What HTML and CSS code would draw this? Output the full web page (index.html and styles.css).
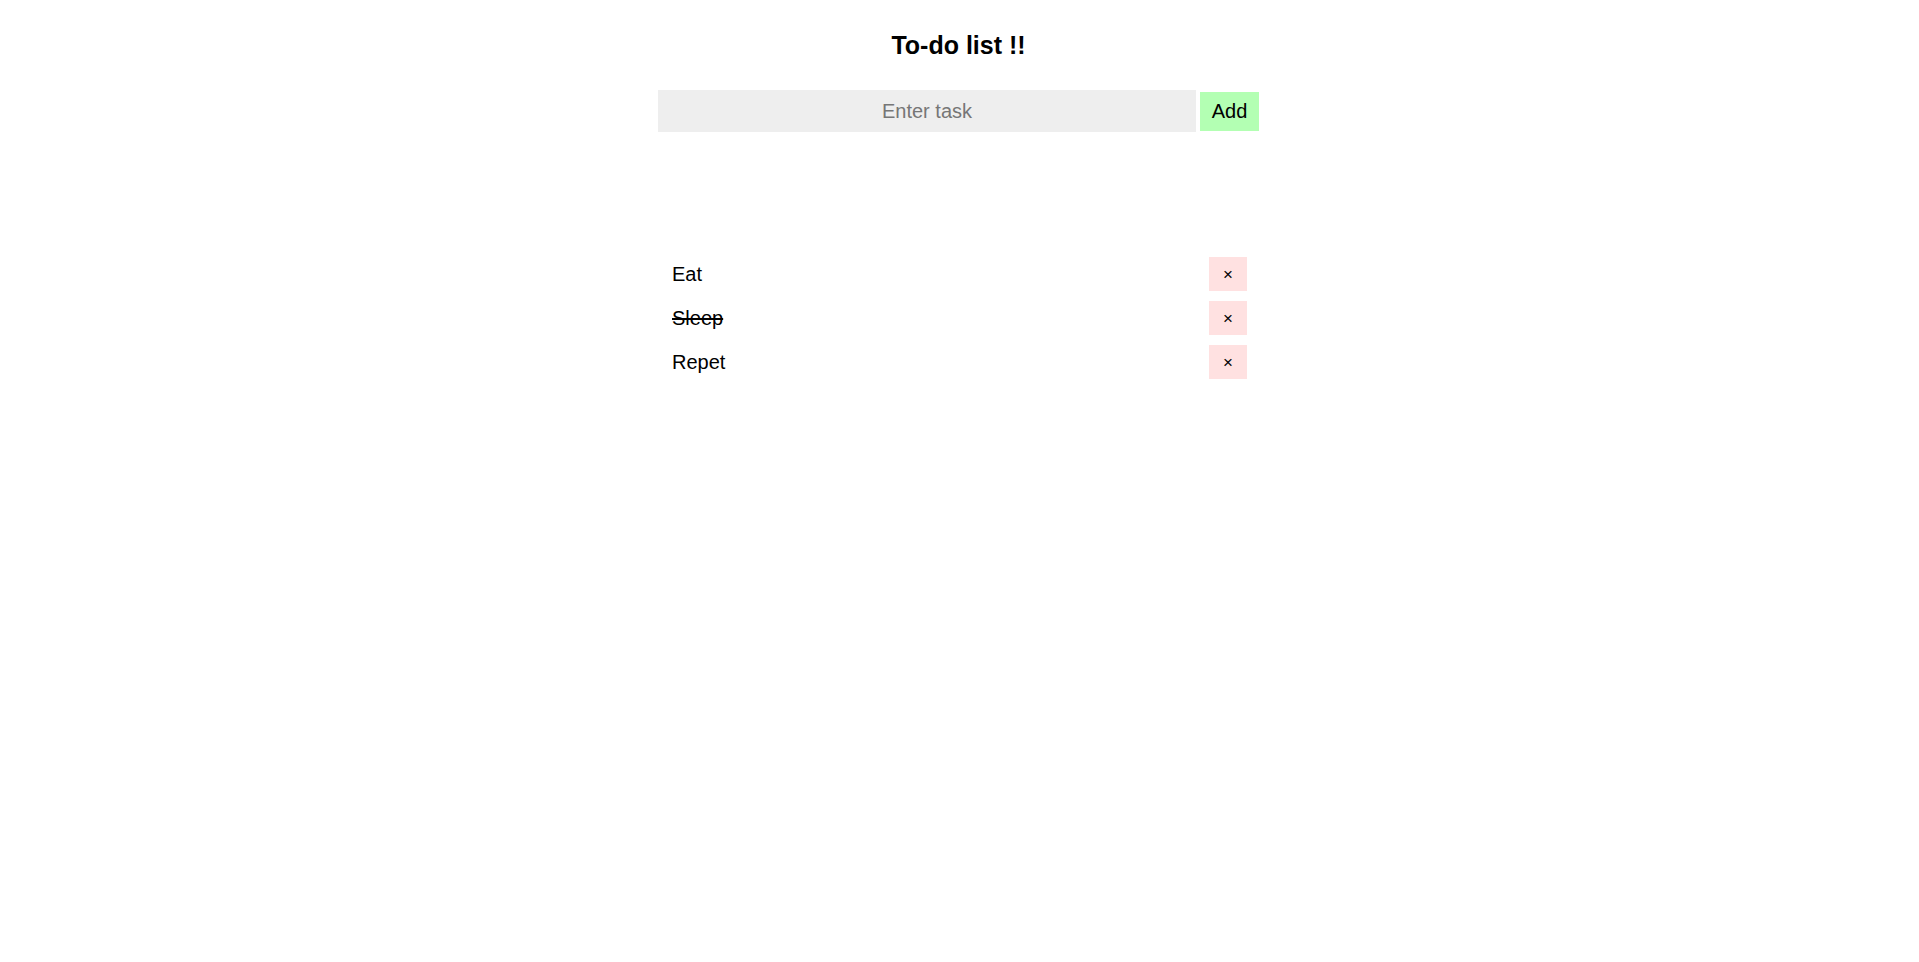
FILE: index.html
```html
<!DOCTYPE html>
<html lang="en">
<head>
<meta charset="utf-8">
<title>To-do list</title>
<link rel="stylesheet" href="styles.css">
</head>
<body>
<div class="app">
  <h1 class="title">To-do list !!</h1>
  <form class="entry" onsubmit="return false">
    <input class="entry-input" type="text" placeholder="Enter task">
    <button class="entry-add" type="submit">Add</button>
  </form>
  <ul class="tasks">
    <li class="task"><span class="task-text">Eat</span><button class="task-remove" type="button">×</button></li>
    <li class="task"><span class="task-text done">Sleep</span><button class="task-remove" type="button">×</button></li>
    <li class="task"><span class="task-text">Repet</span><button class="task-remove" type="button">×</button></li>
  </ul>
</div>
</body>
</html>
```
FILE: styles.css
```css
html, body {
  margin: 0;
  padding: 0;
  background: #ffffff;
}

body {
  font-family: "Liberation Sans", Arial, Helvetica, sans-serif;
  color: #000;
}

.app {
  width: 601px;
  margin: 0 auto;
  padding: 30px 2px 0 0;
}

.title {
  margin: 0;
  font-size: 25px;
  font-weight: bold;
  text-align: center;
  line-height: 29px;
  padding-top: 1px;
}

.entry {
  margin: 30px 0 0;
  display: flex;
  align-items: center;
  gap: 4px;
}

.entry-input {
  box-sizing: border-box;
  flex: 1;
  height: 42px;
  border: none;
  outline: none;
  background: #eeeeee;
  font-family: inherit;
  font-size: 20px;
  text-align: center;
  padding: 0 10px;
  margin: 0;
}

.entry-input::placeholder {
  color: #767676;
}

.entry-add {
  box-sizing: border-box;
  height: 39px;
  width: 59px;
  border: none;
  background: #b3ffb3;
  font-family: inherit;
  font-size: 20px;
  color: #000;
  padding: 0;
  margin: 0;
}

.tasks {
  list-style: none;
  margin: 120px 0 0;
  padding: 0;
}

.task {
  display: flex;
  align-items: center;
  justify-content: space-between;
  height: 44px;
  padding: 0 12px 0 14px;
}

.task-text {
  font-size: 20px;
}

.task-text.done {
  text-decoration: line-through;
}

.task-remove {
  box-sizing: border-box;
  width: 38px;
  height: 34px;
  border: none;
  background: #ffe1e1;
  font-family: inherit;
  font-size: 17px;
  color: #000;
  padding: 2px 0 0;
  margin: 0;
}
```
